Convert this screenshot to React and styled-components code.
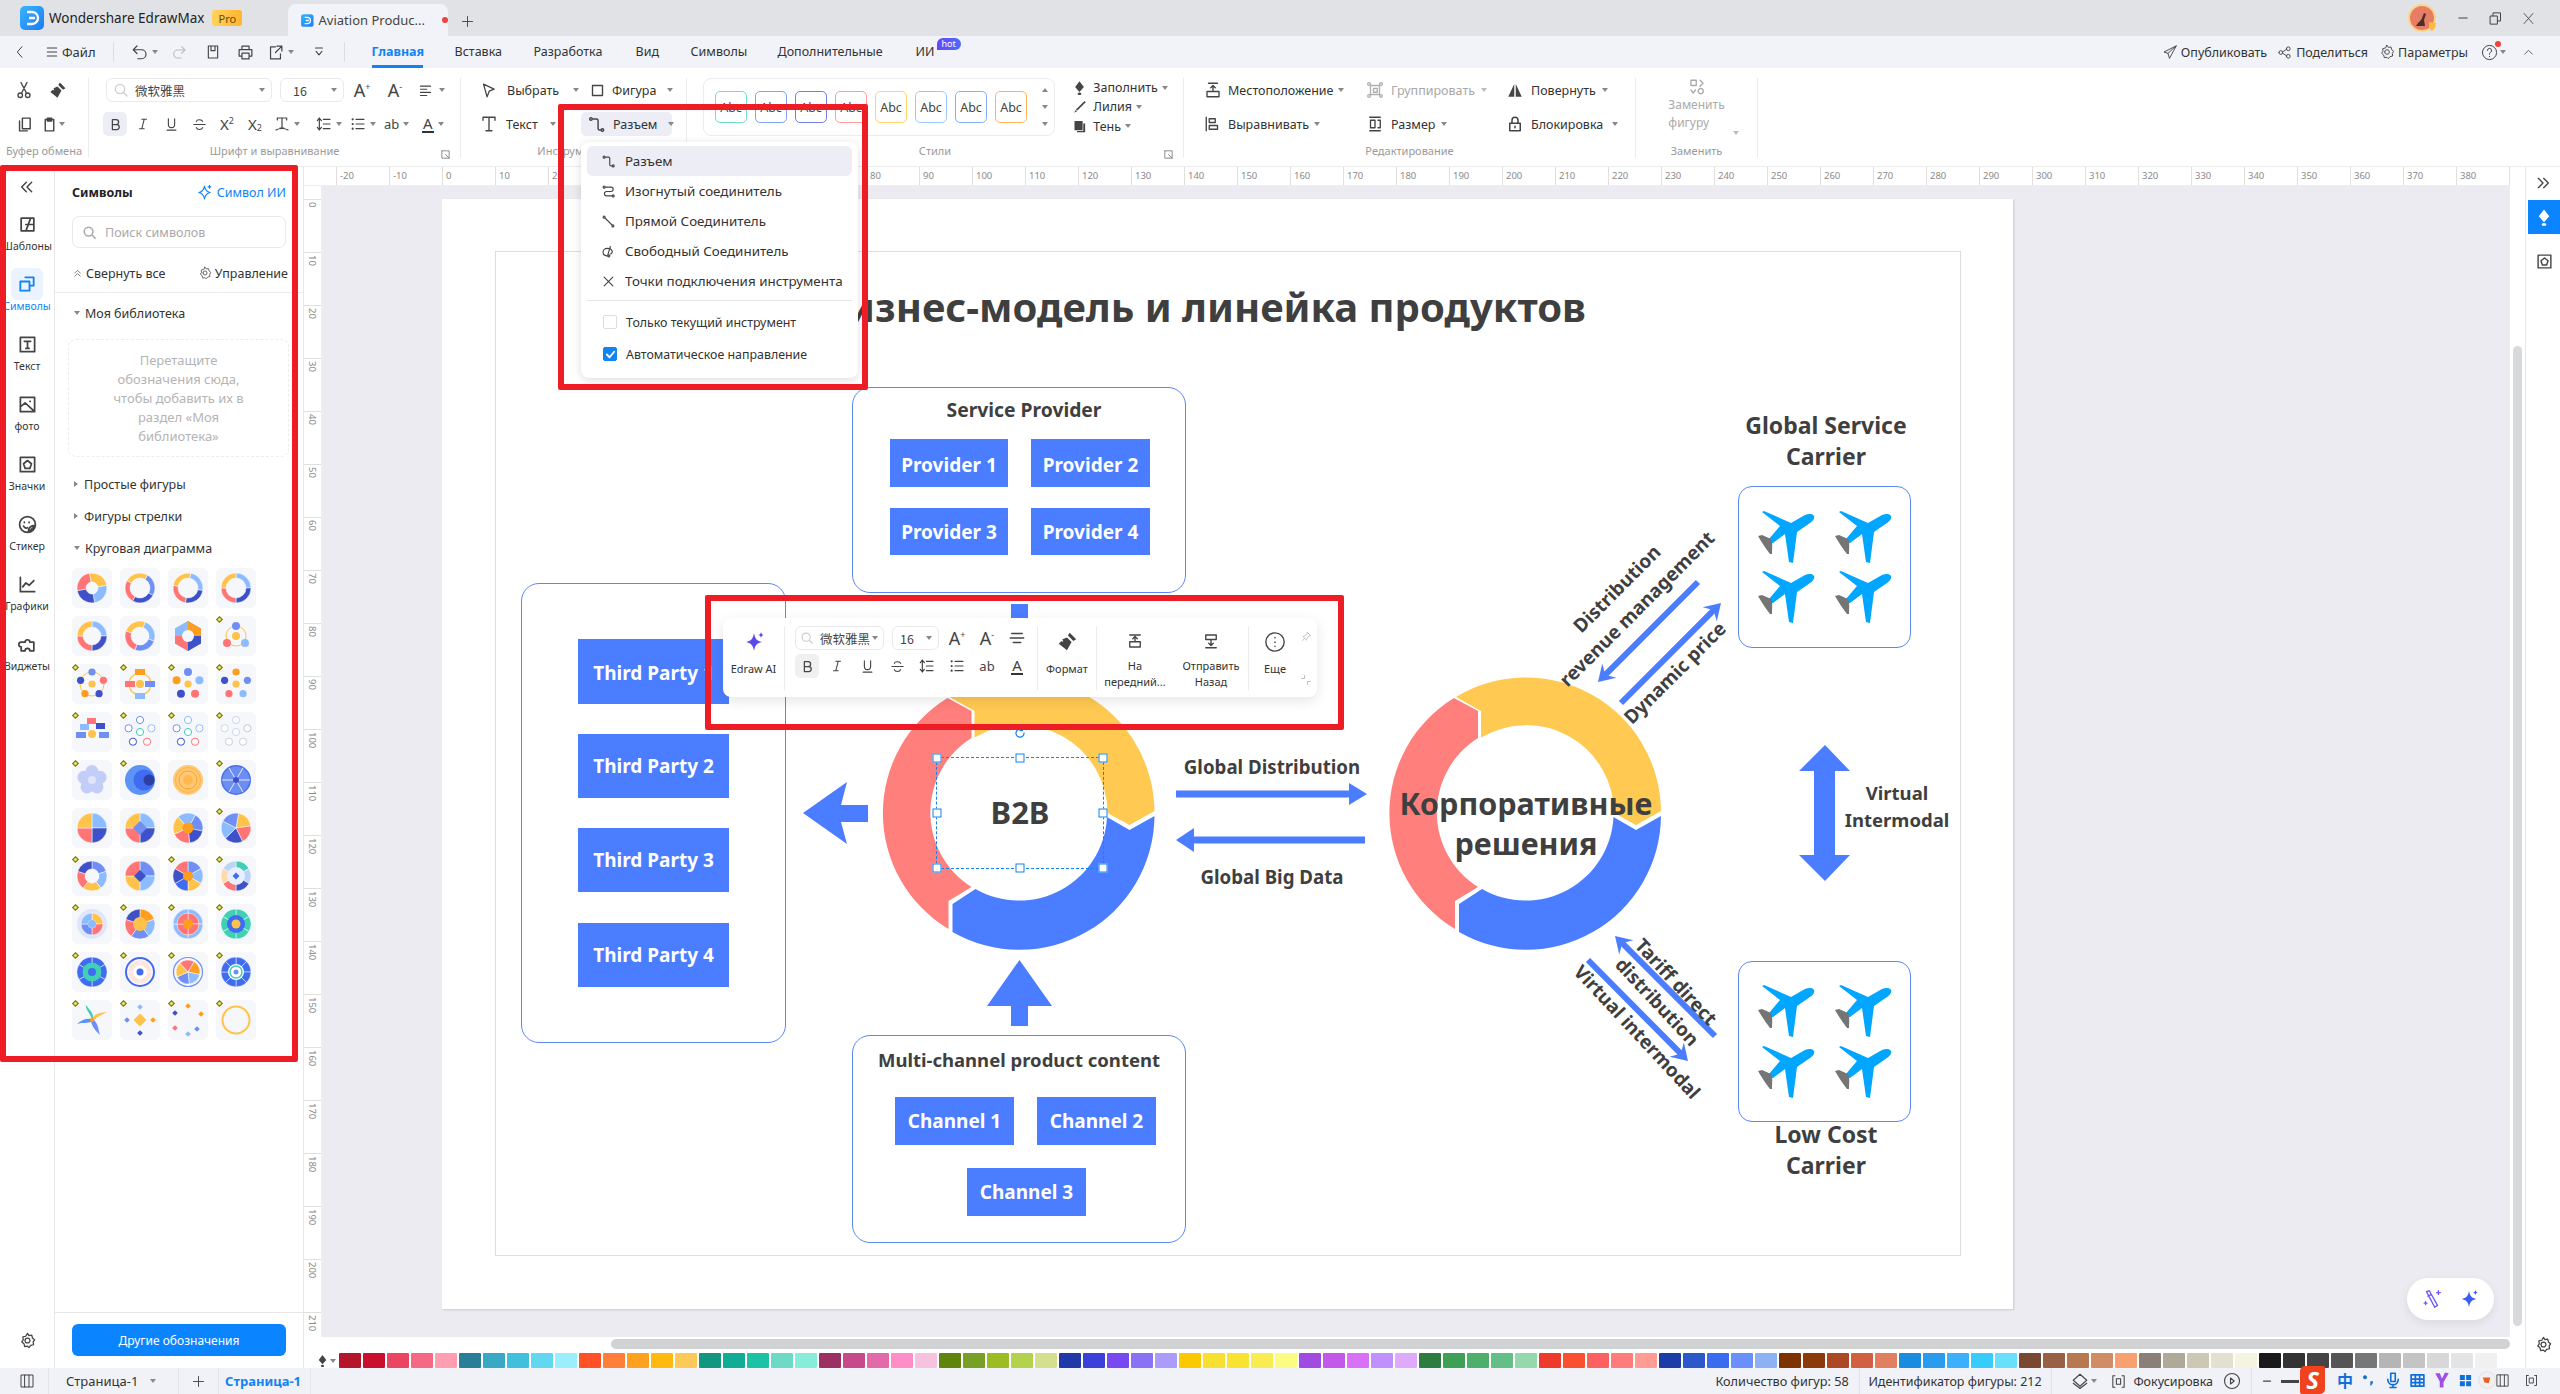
import React from "react";
import styled, { createGlobalStyle } from "styled-components";

const GlobalStyle = createGlobalStyle`
  html, body { margin: 0; padding: 0; background: #fff; overflow: hidden; }
  body { font-family: "Noto Sans", "Noto Sans CJK SC", sans-serif; color: #333; }
  * { box-sizing: border-box; }
`;

/* ---------- icon set ---------- */
const circ = (x, y, r) => `M${x - r} ${y}a${r} ${r} 0 1 0 ${2 * r} 0a${r} ${r} 0 1 0 ${-2 * r} 0`;
const SPARK = "M12 3c1 6 3 8 8 9-5 1-7 3-8 9-1-6-3-8-8-9 5-1 7-3 8-9z";
const P = {
  back: "M15 4 8 12l7 8",
  menu: "M5 6h14M5 12h14M5 18h14",
  undo: "M8 4 3 9l5 5M3 9h11a6 6 0 0 1 0 12H9",
  redo: "M16 4l5 5-5 5M21 9H10a6 6 0 0 0 0 12h5",
  save: "M5 3h14v18H5zM9 3v7h6V3",
  print: "M7 8V3h10v5M7 17H3V8h18v9h-4M7 13h10v8H7z",
  exportBox: "M12 4H5v17h14v-7M14 3h7v7M21 3l-9 9",
  more: "M6 5h12M7 11l5 6 5-6",
  cut: `M8.8 16 16 2M15.2 16 8 2${circ(7, 19, 3)}${circ(17, 19, 3)}`,
  copy: "M9 3h11v15H9zM5 7v14h11",
  paste: "M6 5h12v16H6zM9 3h6v4H9z",
  alignL: "M4 5h16M4 10h10M4 15h16M4 20h10",
  alignC: "M5 6h14M3 12h18M7 18h10",
  search: `${circ(10.5, 10.5, 7)}M16 16l5 5`,
  bold: "M7 4h6a4 4 0 0 1 0 8H7zM7 12h7a4 4 0 0 1 0 8H7z",
  italic: "M10 4h8M6 20h8M14 4l-4 16",
  under: "M7 3v9a5 5 0 0 0 10 0V3M5 21h14",
  strike: "M17 7c-1-3-9-4-10 0M3 12h18M7 17c1 4 9 4 10 0",
  list: `M9 5h12M9 12h12M9 19h12${circ(4, 5, .7)}${circ(4, 12, .7)}${circ(4, 19, .7)}`,
  spacing: "M11 5h10M11 12h10M11 19h10M5 3v18M2 7l3-4 3 4M2 17l3 4 3-4",
  txt: "M5 6V3h14v3M12 3v15M9 18h6M3 21c5-3 13-3 18 0",
  pointer: "M5 3l15 7-7 3-3 8z",
  square: "M4 4h16v16H4z",
  bigT: "M4 7V3h16v4M12 3v18M8 21h8",
  conn: `M8 5h4a2 2 0 0 1 2 2v10a2 2 0 0 0 2 2h1${circ(5, 5, 1.6)}${circ(19.5, 19, 1.6)}`,
  curve: `M8 5h8a3 3 0 0 1 0 7H9a3 3 0 0 0 0 7h8${circ(5, 5, 1.6)}${circ(19.5, 19, 1.6)}`,
  straight: `M6 6l12 12${circ(5, 5, 1.6)}${circ(19, 19, 1.6)}`,
  free: `M10 19c-9 0-9-12 0-12s10 8 5 9M15 4l-4 13${circ(12.5, 19, 1.6)}`,
  cross: "M5 5l14 14M19 5 5 19",
  gear: `M12 2l2 3 4-.5 1 4 3 2.500-2 3 .5 4-4 1-2.500 3-2-2-4 .5-1-4-3-2.500 2-3-.5-4 4-1z${circ(12, 12, 3.5)}`,
  share: `${circ(6, 12, 3)}${circ(18, 6, 3)}${circ(18, 18, 3)}M9 11l6-4M9 13l6 4`,
  send: "M21 3 3 12l6 2 2 7zM21 3 9 14",
  help: `${circ(12, 12, 10)}M9 9a3 3 0 1 1 4 3c-1 .5-1 1-1 2.500M12 17.500v.5`,
  chevUp: "M5 15l7-7 7 7",
  chevsL: "M11 5l-7 7 7 7M19 5l-7 7 7 7",
  chevsR: "M5 5l7 7-7 7M13 5l7 7-7 7",
  chevsUp: "M6 11l6-6 6 6M6 18l6-6 6 6",
  template: "M4 4h16v16H4zM16 4l-6 16M10 12h10",
  symbols: "M10 4h10v10h-4M4 9h11v11H4z",
  textBox: "M3 3h18v18H3zM8 8h8M12 8v9M10 17h4",
  photo: "M3 3h18v18H3zM3 15l6-5 11 10M15 8h.5",
  badge: "M3 3h18v18H3zM12 7l5 4-2 6H9l-2-6z",
  sticker: `${circ(12, 12, 10)}M8 9v.5M14 9v.5M22 13l-9 9c0-6 3-9 9-9M7 14c1 2 3 3 5 2`,
  chart: "M3 3v18h18M6 15l4-5 4 3 6-6",
  puzzle: "M4 9h5a3 3 0 1 1 6 0h5v11h-5a3 3 0 1 0-6 0H4v-5a3 3 0 1 1 0-6z",
  sliders: "M9 3H3v18h6M15 3h6v18h-6M9 3h6v18H9z",
  plus: "M12 4v16M4 12h16",
  minus: "M5 12h14",
  focus: "M4 4h3M4 4v16h3M20 4h-3M20 4v16h-3M9 8h6v8H9z",
  play: `${circ(12, 12, 10)}M10 8l5 4-5 4z`,
  layers: "M12 3l9 8-9 8-9-8zM3 15l9 7 9-7",
  pin: "M14 3l7 7-4 1-4 5-1 4-8-8 4-1 5-4zM8 16l-5 5",
  dotsCircle: `${circ(12, 12, 10)}M12 7v.5M12 12v.5M12 16.500v.5`,
  front: "M5 4h14M12 7v5M9 9l3-3 3 3M5 13h14v7H5z",
  backward: "M5 4h14v6H5zM12 10v7M9 15l3 3 3-3M5 21h14",
  pos: "M6 3h12M12 6v7M9 9l3-3 3 3M4 14h16v7H4z",
  alignObj: "M3 3v18M7 5h8v5H7zM7 14h11v5H7z",
  group: `M6 6h12v12H6zM10 10h5v5h-5z${circ(4, 4, 1.8)}${circ(20, 4, 1.8)}${circ(4, 20, 1.8)}${circ(20, 20, 1.8)}`,
  size: "M5 3h14M5 21h14M6 7h6v10H6zM16 7h3v10h-3",
  lock: "M5 11h14v10H5zM8 11V7a4 4 0 0 1 8 0v4M12 15v2",
  replace: "M4 3h7v7H4zM17 14a3.500 3.500 0 1 1-.01 0M16 3l4 4-4 4M4 16l3 4 3-4",
  launcher: "M4 4h16v10M4 4v16h10M12 12l8 8M20 15v5h-5",
  restore: "M8 8V3h12v13h-5M4 8h11v13H4z",
  close: "M5 4l14 16M19 4 5 20",
  tableIc: "M3 4h18v16H3zM3 10h18M3 15h18M9 4v16M15 4v16",
  mic: "M9 3h6v11H9zM5 11c0 10 14 10 14 0M12 18v4M8 22h8",
  cornerArrows: "M3 9h6V3M21 15h-6v6",
  sparkOutline: `${SPARK}M19 2v4M17 4h4`,
  wand: "M6 4l3-1 9 16-3 2zM7.500 9l4-2M19 3v4M17 5h4M5 15v3M3.500 16.500h3",
};
const FILLED = {
  brush: "M15 2l7 7-3 2-6-6zM12 7l5 5-5 9-9-7 3-3 2 1-1-3z",
  fillBucket: "M12 2l7 9-7 8-7-8zM12 20a3 2 0 1 0 .01 0z",
  line: "M20 3l2 2L9 18l-3-1zM6 18l3 1-6 3z",
  shadow: "M4 3h13v15H4zM18 7h3v14H8v-2h10z",
  rotate: "M11 4v17H3zM13 4l8 17h-8z",
  sparkle: `${SPARK}M19 2c.4 2 1 2.600 3 3-2 .4-2.600 1-3 3-.4-2-1-2.600-3-3 2-.4 2.600-1 3-3z`,
  quote: "M6 5a3 3 0 1 0 .01 0zM14 14h4c0 4-2 6-4 7z",
  imeFig: "M3 3l6 0 3 7 4-8 5 1-7 12v7h-5v-8z",
  imeGrid: "M3 3h8v8H3zM13 3h8v8h-8zM3 13h8v8H3zM13 13h8v8h-8z",
};
const IconSvg = styled.svg`
  width: ${p => p.$s || 16}px; height: ${p => p.$s || 16}px; flex: none; display: block;
  fill: none; stroke: ${p => p.$c || "#444"}; stroke-width: ${p => p.$w || 1.8};
  stroke-linecap: round; stroke-linejoin: round;
`;
const FillSvg = styled.svg`
  width: ${p => p.$s || 16}px; height: ${p => p.$s || 16}px; flex: none; display: block;
  fill: ${p => p.$c || "#444"};
`;
const I = ({ n, s, c, w }) => <IconSvg viewBox="0 0 24 24" $s={s} $c={c} $w={w}><path d={P[n]} /></IconSvg>;
const F = ({ n, s, c }) => <FillSvg viewBox="0 0 24 24" $s={s} $c={c}><path d={FILLED[n]} /></FillSvg>;

const Caret = styled.i`
  display: inline-block; flex: none; width: 0; height: 0;
  margin-left: ${p => p.$ml ?? 4}px;
  border-left: 3px solid transparent; border-right: 3px solid transparent;
  border-top: 4px solid ${p => p.$c || "#888"};
`;

/* ---------- frame ---------- */
const Root = styled.div`
  position: relative; width: 2560px; height: 1394px; overflow: hidden;
  display: flex; flex-direction: column; background: #fff;
`;
const TitleBar = styled.div`
  height: 36px; flex: none; background: #e1e2e6; display: flex; align-items: flex-end; position: relative;
`;
const AppTab = styled.div`
  display: flex; align-items: center; height: 36px; width: 288px; padding-left: 20px; font-size: 13.5px; color: #222; gap: 5px;
`;
const ProBadge = styled.span`
  margin-left: 3px; width: 30px; height: 16px; border-radius: 3px; background: linear-gradient(90deg,#ffd35c,#ffb52e);
  display: flex; align-items: center; justify-content: center; font-size: 11px; color: #6a4300;
`;
const DocTab = styled.div`
  width: 160px; height: 32px; background: #f2f3f8; border-radius: 8px 8px 0 0; display: flex; align-items: center;
  padding-left: 13px; gap: 5px; font-size: 13px; color: #444; white-space: nowrap;
`;
const RedDot = styled.i`
  width: 6px; height: 6px; border-radius: 50%; background: #f0413a; margin-left: 12px; flex: none;
`;
const NewTab = styled.div`
  margin: 0 0 7px 12px; color: #444; display: flex;
`;
const WindowControls = styled.div`
  margin-left: auto; display: flex; align-items: center; height: 36px; padding-right: 20px;
`;
const Avatar = styled.div`
  position: relative; width: 28px; height: 28px; margin-right: 16px;
`;
const WinBtn = styled.div`
  width: ${p => p.$w || 30}px; display: flex; justify-content: center;
`;

const MenuBar = styled.div`
  height: 32px; flex: none; background: #f2f3f8; display: flex; align-items: center; font-size: 13px; color: #333;
`;
const MenuCell = styled.div`
  display: flex; align-items: center; flex: none; margin-left: ${p => p.$ml || 0}px; gap: ${p => p.$gap || 0}px;
`;
const MenuSep = styled.i`
  width: 1px; height: 20px; background: #dcdde2; flex: none; margin-left: ${p => p.$ml || 0}px;
`;
const MenuTabs = styled.div`
  display: flex; gap: 32px; margin-left: 27px; height: 32px;
`;
const MenuTab = styled.div`
  position: relative; width: ${p => p.$w}px; white-space: nowrap; height: 32px; line-height: 31px; font-size: 12.5px;
  font-weight: ${p => (p.$active ? 700 : 400)}; color: ${p => (p.$active ? "#1283f3" : "#333")};
  border-bottom: ${p => (p.$active ? "3px solid #1283f3" : "0")};
`;
const HotBadge = styled.span`
  position: absolute; left: 21px; top: 2px; width: 24px; height: 12px; background: linear-gradient(90deg,#6a46f5,#4b6cff);
  border-radius: 6px 6px 6px 0; color: #fff; font-size: 9px; line-height: 12px; text-align: center; font-weight: 400;
`;
const MenuRight = styled.div`
  margin-left: auto; display: flex; align-items: center; padding-right: 25px; font-size: 12.5px; white-space: nowrap;
`;
const HelpDot = styled.i`
  position: absolute; right: -3px; top: -3px; width: 6px; height: 6px; border-radius: 50%; background: #f0413a;
`;
const HelpWrap = styled.div`
  position: relative; display: flex;
`;

/* ---------- ribbon ---------- */
const Ribbon = styled.div`
  height: 99px; flex: none; background: #fff; display: flex; border-bottom: 1px solid #ececec; font-size: 12.5px; color: #333;
`;
const Group = styled.div`
  position: relative; width: ${p => p.$w}px; flex: none; height: 80px; margin-top: 10px;
  ${p => (p.$last ? "" : "border-right: 1px solid #ececec;")}
  display: flex; flex-direction: column;
`;
const Rows = styled.div`
  height: 58px; display: flex; flex-direction: column; gap: 10px; flex: none;
`;
const Row = styled.div`
  height: 24px; display: flex; align-items: center; padding-left: ${p => p.$pl || 0}px; gap: ${p => p.$gap || 0}px; white-space: nowrap;
`;
const GroupLabel = styled.div`
  flex: none; margin-top: 5px; text-align: center; height: 17px;
  font-size: 11px; line-height: 20px; color: #9a9a9a; white-space: nowrap;
`;
const Launcher = styled.div`
  position: absolute; right: ${p => p.$r}px; bottom: -2px; color: #777;
`;
const Cell = styled.div`
  width: ${p => p.$w || 24}px; height: 24px; flex: none; display: flex; align-items: center; justify-content: ${p => (p.$start ? "flex-start" : "center")};
  margin-left: ${p => p.$ml || 0}px; border-radius: 5px; font-size: 13px; color: #444;
  ${p => (p.$on ? `background: ${p.$on};` : "")}
`;
const BigA = styled.span`
  font-size: 18px; line-height: 20px; color: #444;
`;
const Tiny = styled.span`
  font-size: 9px; line-height: 9px; align-self: ${p => (p.$low ? "flex-end" : "flex-start")}; margin: ${p => (p.$low ? "0 0 4px" : "4px 0 0")};
`;
const UnderA = styled.span`
  font-size: 15px; line-height: 16px; color: #444; border-bottom: 2px solid #333; padding: 0 1px;
`;
const SubX = styled.span`
  font-size: 15px; line-height: 18px; color: #444;
`;
const FontSelect = styled.div`
  width: ${p => p.$w}px; height: 24px; flex: none; border: 1px solid #e9e9ec; border-radius: 6px; display: flex; align-items: center;
  padding: 0 6px 0 ${p => p.$pad || 6}px; gap: 6px; font-size: 12.5px; color: #444; font-family: "Noto Sans CJK SC", sans-serif; white-space: nowrap; overflow: hidden;
`;
const Push = styled.span`
  margin-left: auto; display: flex;
`;
const Tool = styled.div`
  width: ${p => p.$w}px; height: 24px; flex: none; display: flex; align-items: center; padding-left: ${p => p.$pl || 0}px; gap: ${p => p.$gap || 6}px;
  border-radius: 5px; color: ${p => (p.$dim ? "#a8a8a8" : "#333")}; white-space: nowrap; font-size: 12.5px;
  ${p => (p.$on ? "background: #ecedf5;" : "")}
`;
const Gallery = styled.div`
  margin-left: 16px; width: 352px; height: 58px; border: 1px solid #ececef; border-radius: 8px; display: flex; align-items: center; padding-left: 11px; gap: 8px; flex: none; position: relative;
`;
const Swatch = styled.div`
  width: 32px; height: 32px; flex: none; border: 1px solid ${p => p.$c}; border-radius: 5px; display: flex; align-items: center; justify-content: center; font-size: 12.5px; color: #444;
`;
const GalleryArrows = styled.div`
  position: absolute; right: 4px; top: 9px; bottom: 9px; display: flex; flex-direction: column; justify-content: space-between; align-items: center; width: 10px;
`;
const UpCaret = styled(Caret)`
  margin: 0; border-top: 0; border-bottom: 4px solid #888;
`;
const StylesRow = styled.div`
  display: flex; height: 58px; flex: none;
`;
const FillCol = styled.div`
  margin: 0 0 0 17px; display: flex; flex-direction: column;
`;
const FillRow = styled.div`
  height: 19.5px; display: flex; align-items: center; gap: 3px; white-space: nowrap; font-size: 12.5px;
`;
const EditCol = styled.div`
  width: ${p => p.$w}px; flex: none; display: flex; flex-direction: column; gap: 10px;
`;
const EditCols = styled.div`
  display: flex; height: 58px; flex: none; padding-left: 20px;
`;
const ReplaceBlock = styled.div`
  height: 58px; position: relative; display: flex; flex-direction: column; align-items: center; color: #aaa; font-size: 12px; line-height: 18px; flex: none;
`;
const ReplaceCaret = styled.span`
  position: absolute; right: 18px; top: 44px;
`;

/* ---------- main ---------- */
const Main = styled.div`
  flex: 1; min-height: 0; display: flex;
`;
const LeftSide = styled.div`
  width: 304px; flex: none; display: flex; background: #fff;
`;
const Rail = styled.div`
  width: 55px; flex: none; display: flex; flex-direction: column; align-items: center; border-right: 1px solid #e7e7e7;
`;
const RailTop = styled.div`
  height: 39px; display: flex; align-items: center; flex: none;
`;
const RailItem = styled.div`
  width: 55px; height: 60px; flex: none; display: flex; flex-direction: column; align-items: center; padding-top: 2px;
  font-size: 10.5px; color: ${p => (p.$active ? "#1283f3" : "#333")}; white-space: nowrap;
`;
const RailIcon = styled.div`
  width: 32px; height: 32px; border-radius: 6px; display: flex; align-items: center; justify-content: center; background: ${p => (p.$active ? "#eaf3ff" : "transparent")};
`;
const RailLabel = styled.div`
  line-height: 14px; margin-top: -1px;
`;
const RailBottom = styled.div`
  margin-top: auto; height: 56px; flex: none; display: flex; align-items: center;
`;
const SymPanel = styled.div`
  width: 249px; flex: none; display: flex; flex-direction: column; border-right: 1px solid #e7e7e7;
`;
const PanelHead = styled.div`
  height: 49px; flex: none; padding: 2px 17px 0; display: flex; align-items: center; justify-content: space-between;
`;
const PanelTitle = styled.div`
  font-size: 12.5px; font-weight: 700; color: #222;
`;
const AiLink = styled.div`
  display: flex; align-items: center; gap: 4px; color: #1283f3; font-size: 12.5px; white-space: nowrap;
`;
const SearchBox = styled.div`
  height: 32px; margin: 0 17px; flex: none; border: 1px solid #e9e9ec; border-radius: 7px; display: flex; align-items: center; gap: 8px; padding-left: 9px; font-size: 12.5px; color: #a9a9a9; white-space: nowrap;
`;
const ActionRow = styled.div`
  height: 45px; flex: none; padding: 6px 15px 0 17px; border-bottom: 1px solid #ebebeb; display: flex; align-items: center; justify-content: space-between; font-size: 12.5px; color: #333; white-space: nowrap;
`;
const ActionItem = styled.div`
  display: flex; align-items: center; gap: 3px;
`;
const SectionHead = styled.div`
  height: ${p => p.$h || 32}px; flex: none; padding-left: 17px; display: flex; align-items: center; gap: 5px; font-size: 12.5px; color: #333; white-space: nowrap;
`;
const RightCaret = styled.i`
  width: 0; height: 0; flex: none; margin: 0 1px 0 2px; border-top: 3px solid transparent; border-bottom: 3px solid transparent; border-left: 4px solid #888;
`;
const DropZone = styled.div`
  margin: 6px 14px 11px 13px; height: 118px; flex: none; border: 1px dashed #ededed; border-radius: 8px; display: flex; align-items: center; justify-content: center;
  text-align: center; font-size: 13px; line-height: 19px; color: #b4b4b4; white-space: nowrap;
`;
const ThumbGrid = styled.div`
  margin: 4px 0 0 17px; display: grid; grid-template-columns: repeat(4, 40px); grid-auto-rows: 40px; gap: 8px;
`;
const Thumb = styled.div`
  position: relative; background: #f6f7fb; border-radius: 6px;
`;
const ThumbSvg = styled.svg`
  width: 40px; height: 40px; display: block;
`;
const Premium = styled.i`
  position: absolute; left: 1px; top: 1px; width: 5px; height: 5px; background: #f6e33c; border: 1px solid #6b6b3a; transform: rotate(45deg);
`;
const PanelFoot = styled.div`
  margin-top: auto; height: 56px; flex: none; border-top: 1px solid #e7e7e7; padding: 11px 17px 0;
`;
const MoreBtn = styled.div`
  height: 32px; background: #0a84ff; color: #fff; border-radius: 6px; display: flex; align-items: center; justify-content: center; font-size: 12px;
`;

const Workspace = styled.div`
  flex: 1; min-width: 0; display: grid; grid-template-rows: 19px 1fr 16px 15px;
`;
const RulerTop = styled.div`
  display: flex; background: #fff; padding-left: 32px; overflow: hidden; border-bottom: 1px solid #eee; width: 2206px;
`;
const RulerCell = styled.div`
  width: 53px; flex: none; border-left: 1px solid #dfdfdf; padding: 0 0 0 3px; font-size: 9.5px; line-height: 18px; color: #8a8a8a;
`;
const CanvasRow = styled.div`
  display: flex; min-height: 0;
`;
const RulerLeft = styled.div`
  width: 18px; flex: none; background: #fff; padding-top: 13px; overflow: hidden; border-right: 1px solid #eee;
`;
const RulerLeftCell = styled.div`
  height: 53px; border-top: 1px solid #dfdfdf; display: flex; justify-content: flex-start; padding-left: 3px;
`;
const RulerLeftText = styled.span`
  writing-mode: vertical-rl; font-size: 9.5px; line-height: 10px; color: #8a8a8a; padding-top: 2px;
`;
const CanvasArea = styled.div`
  position: relative; flex: 1; min-width: 0; background: #ecebf1; overflow: hidden;
`;
const Page = styled.div`
  position: absolute; left: 120px; top: 13px; width: 1571px; height: 1110px; background: #fff; box-shadow: 1px 1px 2px rgba(0,0,0,.15);
`;
const PageFrame = styled.div`
  position: absolute; left: 53px; top: 52px; width: 1466px; height: 1005px; border: 1px solid #dedede;
`;
const DiagramSvg = styled.svg`
  position: absolute; inset: 0; width: 1571px; height: 1110px; display: block;
`;
const Title = styled.div`
  position: absolute; left: ${p => p.$x - 442}px; top: ${p => p.$y - 199}px; transform: translate(-50%, -50%);
  font-size: 40px; font-weight: 700; color: #3f3f3f; white-space: nowrap;
`;
const Frame = styled.div`
  position: absolute; left: ${p => p.$x - 442}px; top: ${p => p.$y - 199}px; width: ${p => p.$w}px; height: ${p => p.$h}px;
  border: 1px solid #5b86f5; border-radius: ${p => p.$r || 18}px;
`;
const BlueNode = styled.div`
  position: absolute; left: ${p => p.$x - 442}px; top: ${p => p.$y - 199}px; width: ${p => p.$w}px; height: ${p => p.$h}px;
  background: #4a7dff; color: #fff; font-size: 19px; font-weight: 700; display: flex; align-items: center; justify-content: center; white-space: nowrap; padding-top: ${p => p.$pt || 0}px;
`;
const Label = styled.div`
  position: absolute; left: ${p => p.$x - 442}px; top: ${p => p.$y - 199}px; transform: translate(-50%, -50%) rotate(${p => p.$rot || 0}deg);
  font-size: ${p => p.$fs || 18.7}px; font-weight: ${p => p.$fw || 700}; color: #3f3f3f; white-space: nowrap; text-align: center; line-height: ${p => (p.$lh ? p.$lh + "px" : "1.2")};
`;
const SelBox = styled.div`
  position: absolute; left: ${936 - 442}px; top: ${757 - 199}px; width: 168px; height: 112px; border: 1px dashed #1283f3;
`;
const Handle = styled.i`
  position: absolute; left: ${p => p.$x}%; top: ${p => p.$y}%; width: 9px; height: 9px; background: #fff; border: 1px solid #1283f3; transform: translate(-50%, -50%);
`;
const TopHandle = styled.i`
  position: absolute; left: ${1011 - 442}px; top: ${604 - 199}px; width: 17px; height: 14px; background: #4a7dff;
`;
const RotHandle = styled.div`
  position: absolute; left: ${1014 - 442}px; top: ${727 - 199}px; display: flex;
`;
const AiPill = styled.div`
  position: absolute; right: 16px; bottom: 17px; width: 87px; height: 42px; background: #fff; border-radius: 21px; box-shadow: 0 3px 10px rgba(0,0,0,.08); display: flex; align-items: center; justify-content: space-around; padding: 0 7px;
`;
const VTrack = styled.div`
  width: 15px; flex: none; background: #fff; padding: 160px 3px 0;
`;
const VThumb = styled.div`
  width: 9px; height: 980px; border-radius: 5px; background: #d8d9db;
`;
const HTrack = styled.div`
  background: #fff; padding: 2px 15px 0 307px;
`;
const HThumb = styled.div`
  height: 10px; border-radius: 5px; background: #d1d2d4;
`;
const PaletteRow = styled.div`
  display: flex; align-items: center; background: #fff; padding-left: 12px; gap: 2px;
`;
const PaletteIcon = styled.div`
  width: 21px; flex: none; display: flex; align-items: center;
`;
const Shade = styled.i`
  width: 22px; height: 15px; flex: none; background: ${p => p.$c}; border-radius: 1px;
`;
const RightRail = styled.div`
  width: 35px; flex: none; background: #fff; border-left: 1px solid #e7e7e7; display: flex; flex-direction: column; align-items: center; padding-top: 8px;
`;
const RailTile = styled.div`
  width: 33px; height: 34px; margin: ${p => p.$mt || 0}px 0 0 2px; display: flex; align-items: center; justify-content: center; background: ${p => (p.$on ? "#0a84ff" : "transparent")};
`;
const RightBottom = styled.div`
  margin-top: auto; height: 32px; display: flex;
`;

/* ---------- status bar ---------- */
const StatusBar = styled.div`
  height: 26px; flex: none; background: #f1f2f7; display: flex; align-items: center; font-size: 13px; color: #333; white-space: nowrap;
`;
const StatusCell = styled.div`
  height: 26px; flex: none; display: flex; align-items: center; width: ${p => (p.$w ? p.$w + "px" : "auto")}; padding-left: ${p => p.$pl || 0}px; gap: ${p => p.$gap || 0}px;
  ${p => (p.$line ? "border-right: 1px solid #e3e4ea;" : "")}
  color: ${p => (p.$blue ? "#1283f3" : "#333")}; font-weight: ${p => (p.$blue ? 700 : 400)}; font-size: ${p => p.$fs || 13}px;
`;
const StatusRight = styled.div`
  margin-left: auto; display: flex; align-items: center; height: 26px;
`;
const ZoomBar = styled.i`
  width: 18px; height: 3px; background: #444; margin-left: 8px; flex: none;
`;
const ImeBar = styled.div`
  position: absolute; left: 2300px; top: 1366px; width: 197px; height: 28px; display: flex; align-items: center;
`;
const ImeLogo = styled.div`
  width: 25px; height: 28px; background: #f0421c; border-radius: 5px 2px 5px 2px; color: #fff; font-size: 24px; font-weight: 700; font-style: italic; display: flex; align-items: center; justify-content: center; flex: none; line-height: 1;
`;
const ImeChar = styled.div`
  margin-left: 8px; width: 24px; flex: none; font-size: 16px; font-weight: 700; color: #1170d8; text-align: center; font-family: "Noto Sans CJK SC", sans-serif; line-height: 1;
`;
const ImeIcon = styled.div`
  width: ${p => p.$w || 24}px; flex: none; display: flex; justify-content: center;
`;
const StatusEndWrap = styled.div`
  position: absolute; right: 21px; top: 1373px; display: flex; gap: 14px; align-items: center;
`;

/* ---------- overlays ---------- */
const RedBox = styled.div`
  position: absolute; left: ${p => p.$x}px; top: ${p => p.$y}px; width: ${p => p.$w}px; height: ${p => p.$h}px;
  border: 6px solid #ee1c25; border-radius: 2px; pointer-events: none;
`;
const Dropdown = styled.div`
  position: absolute; left: 581px; top: 142px; width: 277px; height: 236px; background: #fff; border-radius: 8px; box-shadow: 0 2px 10px rgba(0,0,0,.14); padding: 4px 6px; font-size: 13.4px; color: #333;
`;
const DropItem = styled.div`
  height: 30px; display: flex; align-items: center; gap: 9px; padding-left: 14px; border-radius: 6px; white-space: nowrap;
  ${p => (p.$on ? "background: #ecedf5;" : "")}
`;
const DropSep = styled.div`
  height: 1px; background: #e5e5e8; margin: 4px 0 0;
`;
const CheckRow = styled.div`
  height: 32px; display: flex; align-items: center; gap: 9px; padding-left: 16px; font-size: 12.4px; white-space: nowrap; margin-top: ${p => p.$mt || 0}px;
`;
const Check = styled.div`
  width: 14px; height: 14px; flex: none; border-radius: 2px; border: 1px solid ${p => (p.$on ? "#1283f3" : "#ddd")}; background: ${p => (p.$on ? "#1283f3" : "#fff")}; display: flex; align-items: center; justify-content: center;
`;
const FloatBar = styled.div`
  position: absolute; left: 723px; top: 618px; width: 594px; height: 79px; background: #fff; border-radius: 8px; box-shadow: 0 4px 14px rgba(0,0,0,.1); display: flex; font-size: 11px; color: #333;
`;
const FloatSection = styled.div`
  width: ${p => p.$w}px; flex: none; margin: 8px 0 7px; position: relative; display: flex; ${p => (p.$last ? "" : "border-right: 1px solid #ececec;")}
`;
const ColBtn = styled.div`
  width: ${p => p.$w || "100%"}; display: flex; flex-direction: column; align-items: center; text-align: center; line-height: 16px; white-space: nowrap; flex: none;
`;
const FloatIcon = styled.div`
  height: ${p => p.$h || 32}px; display: flex; align-items: center; justify-content: center; margin-bottom: ${p => p.$mb ?? 3}px;
`;
const FloatFont = styled.div`
  padding: 0 0 0 10px; display: flex; flex-direction: column; gap: 4px;
`;
const FloatRow = styled.div`
  display: flex; height: 24px; align-items: center; gap: ${p => p.$gap || 0}px;
`;
const PinIcon = styled.div`
  position: absolute; right: 5px; top: 5px;
`;
const CornerIcon = styled.div`
  position: absolute; right: 5px; bottom: 4px;
`;

/* ---------- thumbnail art ---------- */
const Y = "#ffc24a", LB = "#8cbcff", DB = "#3f51c8", R = "#ff7474", MB = "#6f8ff5", O = "#ff9d1e", T = "#3fd0b5", PB = "#c2cdf8";
const pol = (r, a) => [20 + r * Math.cos(a * Math.PI / 180), 20 + r * Math.sin(a * Math.PI / 180)];
const seg = (Ro, ri, a0, a1) => {
  const [x0, y0] = pol(Ro, a0), [x1, y1] = pol(Ro, a1), [x2, y2] = pol(ri, a1), [x3, y3] = pol(ri, a0);
  const big = a1 - a0 > 180 ? 1 : 0;
  return `M${x0} ${y0}A${Ro} ${Ro} 0 ${big} 1 ${x1} ${y1}L${x2} ${y2}${ri > 0 ? `A${ri} ${ri} 0 ${big} 0 ${x3} ${y3}` : ""}Z`;
};
const ring = (Ro, ri, cs, off = -90) => cs.map((c, i) => (
  <path key={`${Ro}-${i}`} d={seg(Ro, ri, off + i * 360 / cs.length, off + (i + 1) * 360 / cs.length)} fill={c} stroke="#fff" strokeWidth=".5" />
));
const dot = (x, y, r, f, k, s) => <circle key={k ?? `${x}${y}${r}`} cx={x} cy={y} r={r} fill={f} stroke={s || "none"} strokeWidth={s ? 1 : 0} />;
const hub = (n, Ro, rd, cs, ctr = Y, hollow = false) => (
  <>
    {cs.map((c, i) => { const [x, y] = pol(Ro, -90 + i * 360 / n); return dot(x, y, rd, hollow ? "#fff" : c, i, hollow ? c : null); })}
    {dot(20, 20, 3.6, hollow ? "#fff" : ctr, "c", hollow ? ctr : null)}
  </>
);
const diamond = (s, c) => <path d={`M20 ${20 - s}L${20 + s} 20L20 ${20 + s}L${20 - s} 20Z`} fill={c} />;
const circ2 = (r, c, w = 2) => <circle cx="20" cy="20" r={r} fill="none" stroke={c} strokeWidth={w} />;
const arrowDot = (x, y, c) => <rect x={x - 2} y={y - 2} width="4" height="4" fill={c} transform={`rotate(45 ${x} ${y})`} />;

const ART = [
  ring(15, 6, [Y, LB, DB, R], -100), ring(15, 10, [MB, DB, R, Y], -60), ring(15, 10, [LB, DB, R, Y], -80), ring(15, 10, [LB, DB, R, Y], -90),
  ring(15, 9, [LB, DB, R, Y], -90), ring(15, 9, [LB, MB, R, Y], -70),
  <><path d="M20 5 33 12.500V27.500L20 35 7 27.500V12.500Z" fill={LB} /><path d="M20 5 33 12.500V20H20Z" fill={O} /><path d="M7 27.500 20 35V20H7Z" fill={R} /><path d="M7 12.500 20 5V20H7Z" fill={LB} /><path d="M20 20H33V27.500L20 35Z" fill={DB} />{dot(20, 20, 6, "#f6f7fb")}</>,
  <>{circ2(10, Y, 1)}{dot(20, 10, 4, MB)}{dot(11, 27, 4, R)}{dot(29, 27, 4, LB)}{dot(20, 20, 4, Y)}</>,

  <>{circ2(12, Y, 1)}{hub(5, 12, 3.6, [MB, R, DB, O, DB])}</>,
  <>{circ2(11, Y, 1.200)}<rect x="15" y="5" width="10" height="6" fill={O} /><rect x="5" y="17" width="10" height="6" fill={R} /><rect x="25" y="17" width="10" height="6" fill={MB} /><rect x="15" y="29" width="10" height="6" fill={LB} />{dot(20, 20, 4, Y)}</>,
  hub(5, 12, 4, [MB, LB, R, DB, O]),
  hub(5, 12, 3.6, [O, MB, LB, R, DB]),

  <><rect x="15" y="6" width="9" height="6" fill={R} /><rect x="8" y="12" width="9" height="6" fill={LB} /><rect x="24" y="11" width="9" height="6" fill={DB} /><rect x="4" y="20" width="10" height="6" fill={MB} /><rect x="27" y="20" width="10" height="6" fill={MB} />{dot(20, 22, 4, Y)}</>,
  hub(5, 12, 3.6, [MB, LB, R, DB, MB], T, true),
  hub(5, 12, 3.6, [LB, LB, R, DB, MB], T, true),
  hub(5, 12, 3.6, ["#c8d8f0", "#c0c8c8", "#c8d0d8", "#c8d0d8", "#c8d8f0"], "#c8d8f0", true),

  <>{[0, 1, 2, 3, 4].map(i => { const [x, y] = pol(8.5, -90 + i * 72); return dot(x, y, 6.5, PB, i); })}{dot(20, 20, 4, "#dfe5fb")}</>,
  <>{dot(20, 20, 15, "#5c93f7")}{dot(24, 20, 10.5, "#3f6cf0")}{dot(29, 20, 5.5, "#2d3fa0")}</>,
  <>{dot(20, 20, 15, "#ffc873")}{circ2(12.5, "#ffb142", 1)}{circ2(9, "#ffa32a", 1)}{dot(20, 20, 5, "#ffb84f")}</>,
  <>{dot(20, 20, 15, "#4a6fe8")}{dot(20, 20, 13.500, "#6c8ef2")}{[0, 60, 120, 180, 240, 300].map(a => { const [x, y] = pol(14, a); return <line key={a} x1="20" y1="20" x2={x} y2={y} stroke="#fff" strokeWidth=".8" />; })}{dot(20, 20, 3, DB)}</>,

  ring(15, 0, [LB, DB, R, Y]),
  <>{ring(15, 0, [LB, DB, R, Y])}{diamond(7, MB)}</>,
  <>{ring(15, 0, [MB, DB, R, Y, LB], -60)}{dot(20, 20, 5.500, O)}</>,
  ring(15, 0, [Y, R, DB, LB, MB], -80),

  ring(15, 7, [MB, LB, Y, R, DB], -90),
  <>{ring(15, 0, [MB, LB, Y, R], -90)}{diamond(6, DB)}</>,
  <>{ring(15, 0, [MB, LB, Y, "#3f6cf0", DB, R], -90)}{dot(20, 20, 5, O)}</>,
  <>{ring(15, 0, [T, "#bcd4f8", DB, R, "#ffd9a8", "#bcd4f8"], -90)}{dot(20, 20, 9, "#e8f0ff")}{diamond(3.500, "#3f6cf0")}</>,

  <>{dot(20, 20, 15, "#dfe5fb")}{ring(11, 4, [Y, R, MB, LB], -90)}{dot(20, 20, 4, LB)}</>,
  <>{ring(15, 0, [O, LB, MB, R, DB], -90)}{dot(20, 20, 7, Y)}</>,
  <>{ring(15, 0, [LB, LB, LB, LB])}{ring(11, 0, [R, R, R, R])}{dot(20, 20, 5, O)}</>,
  <>{ring(15, 0, [T, T, T, T, T, T])}{dot(20, 20, 9, "#3f6cf0")}{dot(20, 20, 4.500, Y)}</>,

  <>{ring(15, 0, ["#3f6cf0", "#3f6cf0", "#3f6cf0", "#3f6cf0", "#3f6cf0", "#3f6cf0"])}{dot(20, 20, 9.500, T)}{dot(20, 20, 4, "#3f6cf0")}</>,
  <>{circ2(14, "#3f6cf0", 2)}{ring(12, 0, ["#fce5dd", "#fce5dd", "#fce5dd", "#fce5dd"])}{dot(20, 20, 7, "#fff")}{dot(20, 20, 3.500, "#3f6cf0")}</>,
  <>{circ2(14.500, MB, 1.200)}{ring(12, 0, [O, LB, MB, Y, R], -60)}</>,
  <>{ring(15, 0, ["#3f6cf0", "#3f6cf0", "#3f6cf0", "#3f6cf0", "#3f6cf0", "#3f6cf0", "#3f6cf0", "#3f6cf0"])}{dot(20, 20, 8, "#fff")}{circ2(6, T, 1.500)}{dot(20, 20, 2.500, MB)}</>,

  <>
    <path d="M20 20C18 12 13 10 14 5C17 10 22 12 21 20Z" fill={T} />
    <path d="M20 19C24 12 29 13 35 12C30 15 26 16 21 21Z" fill={Y} />
    <path d="M21 19C27 24 26 30 28 35C24 31 20 27 19 21Z" fill={MB} />
    <path d="M21 21C15 24 11 22 5 24C10 19 15 18 20 19Z" fill="#5c93f7" />
    {dot(20, 20, 2, O)}
  </>,
  <>{diamond(6.500, Y)}{arrowDot(20, 7, LB)}{arrowDot(33, 20, O)}{arrowDot(20, 33, DB)}{arrowDot(7, 20, MB)}</>,
  <>{arrowDot(20, 6, O)}{arrowDot(33, 14, O)}{arrowDot(29, 29, MB)}{arrowDot(20, 34, LB)}{arrowDot(7, 28, R)}{arrowDot(7, 13, DB)}</>,
  circ2(13.500, Y, 2),
];
const NO_BADGE = new Set([0, 1, 2, 3, 4, 5, 6, 18, 20, 21, 22, 25]);

const RING_YELLOW = "M-70-116L-45-102V-75.500A88 88 0 0 1 88 0L110 12 135-2A135 135 0 0 0-70-116Z";
const RING_BLUE = "M135 3 110 17 87.500 4A88 88 0 0 1-44 76L-67 91V119A135 135 0 0 0 135 3Z";
const RING_RED = "M-72-115-48-102V-75A88 88 0 0 0-48 74L-71 88V116A135 135 0 0 1-72-115Z";

const Ring3 = ({ x, y }) => (
  <g transform={`translate(${x} ${y})`}>
    <path d={RING_YELLOW} fill="#ffc952" />
    <path d={RING_RED} fill="#ff7f7c" />
    <path d={RING_BLUE} fill="#4a7dff" />
  </g>
);
const Plane = ({ x, y }) => (
  <g transform={`translate(${x} ${y})`}>
    <path d="M56 5C54 2 50 3 47 4L33 12 6 0 4 1 22 15 11 28 9 32 15 32 27 23 31 51 35 52 39 21 52 12C55 10 57 7 56 5Z" fill="#00a6ff" />
    <path d="M0 25 4 24 13 28C15 32 14 38 14 43L12 43C8 38 4 32 0 25Z" fill="#757575" />
  </g>
);
const Arrow = ({ x0, y0, x1, y1, w = 6, hl = 18, hw = 11, notch = 4 }) => {
  const a = Math.atan2(y1 - y0, x1 - x0) * 180 / Math.PI;
  const L = Math.hypot(x1 - x0, y1 - y0);
  return (
    <g transform={`translate(${x0} ${y0}) rotate(${a})`}>
      <path d={`M0 ${-w / 2}H${L - hl + notch}L${L - hl} ${-hw}L${L} 0L${L - hl} ${hw}L${L - hl + notch} ${w / 2}H0Z`} fill="#4a7dff" />
    </g>
  );
};

const COLORS = [
  "#b5152b", "#c8102e", "#ea4662", "#f46a85", "#ff9eb0", "#2a7f98", "#38a8c4", "#40c0dc", "#62d8f0", "#9beefc",
  "#ff5227", "#ff7f3a", "#ffa01e", "#ffb90f", "#ffc95a", "#12967f", "#10ad94", "#1cc2a6", "#6ddac8", "#88ecdb",
  "#9c3062", "#c74b8a", "#e36aa8", "#ff8ec8", "#f6c2de", "#5f850f", "#77a025", "#9dbc22", "#b4d24e", "#d4e08e",
  "#2038a8", "#3a40d8", "#7848f0", "#8a72f4", "#ab9bfc", "#fcc800", "#f8e030", "#f8e430", "#f8ec50", "#fcfc80",
  "#a04ce0", "#c458e8", "#d870f8", "#c090fc", "#dfaafc", "#2e7d40", "#3ea055", "#4cb06c", "#64be88", "#94d8ac",
  "#ee3a2c", "#fa5030", "#fc6060", "#ff7c7c", "#ff9c94", "#1c3ca8", "#2c58cc", "#3a6cf0", "#6a90fc", "#8cb2f4",
  "#7e3200", "#8c3a0a", "#ac4824", "#d06040", "#e08060", "#1a8ce0", "#2a9cf0", "#3cb0fc", "#38ccfc", "#68e0fc",
  "#784830", "#986044", "#b87850", "#d08c64", "#f8a070", "#8a8078", "#b0a898", "#ccc8b4", "#e4e0d0", "#f4f4e0",
  "#1a1a1a", "#333333", "#444444", "#555555", "#777777", "#b5b5b5", "#c4c4c4", "#d8d8d8", "#e4e4e4", "#f0f0f0",
];

const rulerTop = Array.from({ length: 42 }, (_, i) => -20 + i * 10);
const rulerLeft = Array.from({ length: 22 }, (_, i) => i * 10);
const RAIL = [
  ["template", "Шаблоны"], ["symbols", "Символы", true], ["textBox", "Текст"], ["photo", "фото"],
  ["badge", "Значки"], ["sticker", "Стикер"], ["chart", "Графики"], ["puzzle", "Виджеты"],
];
const HANDLES = [[0, 0], [50, 0], [100, 0], [0, 50], [100, 50], [0, 100], [50, 100], [100, 100]];
const SWATCHES = ["#6fe0c8", "#7fa4ee", "#6f82e4", "#ff9c9c", "#ffd56e", "#9cc8ff", "#86aef8", "#ffb45c"];

const LogoMark = ({ s = 24 }) => (
  <svg viewBox="0 0 24 24" width={s} height={s}>
    <defs><linearGradient id="lg" x1="0" y1="0" x2="1" y2="1"><stop offset="0" stopColor="#3ab4ff" /><stop offset="1" stopColor="#1a7cf5" /></linearGradient></defs>
    <rect width="24" height="24" rx="5" fill="url(#lg)" />
    <path d="M7 6h5a6 6 0 0 1 0 12H7M9 12h6" fill="none" stroke="#fff" strokeWidth="2.400" />
  </svg>
);

export default function App() {
  return (
    <Root>
      <GlobalStyle />
      <TitleBar>
        <AppTab>
          <LogoMark />
          Wondershare EdrawMax
          <ProBadge>Pro</ProBadge>
        </AppTab>
        <DocTab>
          <LogoMark s={15} />
          Aviation Produc...
          <RedDot />
        </DocTab>
        <NewTab><I n="plus" s={15} w={1.500} /></NewTab>
        <WindowControls>
          <Avatar>
            <svg viewBox="0 0 28 28" width="28" height="28">
              <circle cx="14" cy="14" r="13" fill="#e77d63" stroke="#f9d48c" strokeWidth="2" />
              <path d="M8 22c2-4 5-5 6-8l2-5 2 1-2 6 1 6z" fill="#4a2f2a" />
              <path d="M21 18l7 1-1 5-3 3-3-3z" fill="#ffb938" />
            </svg>
          </Avatar>
          <WinBtn $w={22}><I n="minus" s={14} w={2} /></WinBtn>
          <WinBtn $w={42}><I n="restore" s={15} w={1.600} /></WinBtn>
          <WinBtn $w={24}><I n="close" s={15} w={1.400} /></WinBtn>
        </WindowControls>
      </TitleBar>

      <MenuBar>
        <MenuCell $ml={12}><I n="back" s={16} w={1.500} /></MenuCell>
        <MenuCell $ml={16} $gap={2}><I n="menu" s={16} w={1.600} />Файл</MenuCell>
        <MenuSep $ml={17} />
        <MenuCell $ml={17}><I n="undo" s={18} w={1.600} /><Caret $ml={3} /></MenuCell>
        <MenuCell $ml={13}><I n="redo" s={16} c="#bbb" w={1.600} /></MenuCell>
        <MenuCell $ml={18}><I n="save" s={16} w={1.700} /></MenuCell>
        <MenuCell $ml={16}><I n="print" s={17} w={1.700} /></MenuCell>
        <MenuCell $ml={13}><I n="exportBox" s={17} w={1.700} /><Caret $ml={4} /></MenuCell>
        <MenuCell $ml={18}><I n="more" s={14} w={1.800} /></MenuCell>
        <MenuSep $ml={18} />
        <MenuTabs>
          <MenuTab $w={51} $active>Главная</MenuTab>
          <MenuTab $w={47}>Вставка</MenuTab>
          <MenuTab $w={70}>Разработка</MenuTab>
          <MenuTab $w={23}>Вид</MenuTab>
          <MenuTab $w={55}>Символы</MenuTab>
          <MenuTab $w={106}>Дополнительные</MenuTab>
          <MenuTab $w={19}>ИИ<HotBadge>hot</HotBadge></MenuTab>
        </MenuTabs>
        <MenuRight>
          <MenuCell $gap={3}><I n="send" s={16} w={1.400} />Опубликовать</MenuCell>
          <MenuCell $ml={10} $gap={4}><I n="share" s={15} w={1.500} />Поделиться</MenuCell>
          <MenuCell $ml={11} $gap={3}><I n="gear" s={16} w={1.400} />Параметры</MenuCell>
          <MenuCell $ml={13}><HelpWrap><I n="help" s={17} w={1.400} /><HelpDot /></HelpWrap><Caret $ml={2} /></MenuCell>
          <MenuCell $ml={16}><I n="chevUp" s={13} w={1.500} /></MenuCell>
        </MenuRight>
      </MenuBar>

      <Ribbon>
        <Group $w={89}>
          <Rows>
            <Row $pl={14} $gap={13}><Cell $w={20}><I n="cut" s={18} /></Cell><Cell $w={20}><F n="brush" s={19} /></Cell></Row>
            <Row $pl={14} $gap={8}><Cell $w={20}><I n="copy" s={17} w={2} /></Cell><Cell $w={22}><I n="paste" s={17} w={2} /><Caret $ml={1} /></Cell></Row>
          </Rows>
          <GroupLabel>Буфер обмена</GroupLabel>
        </Group>

        <Group $w={372}>
          <Rows>
            <Row $pl={17} $gap={8}>
              <FontSelect $w={166}><I n="search" s={16} c="#ccc" w={2} />微软雅黑<Push><Caret $ml={0} /></Push></FontSelect>
              <FontSelect $w={64} $pad={12}>16<Push><Caret $ml={0} /></Push></FontSelect>
              <Cell $w={24} $ml={-2}><BigA>A</BigA><Tiny>+</Tiny></Cell>
              <Cell $w={24} $ml={1}><BigA>A</BigA><Tiny>-</Tiny></Cell>
              <Cell $w={24} $ml={-2}><I n="alignL" s={15} /></Cell>
              <Caret $ml={-6} />
            </Row>
            <Row $pl={14} $gap={4}>
              <Cell $on="#ecedf5"><I n="bold" s={15} w={2} /></Cell>
              <Cell><I n="italic" s={14} /></Cell>
              <Cell><I n="under" s={15} /></Cell>
              <Cell><I n="strike" s={15} /></Cell>
              <Cell><SubX>X</SubX><Tiny>2</Tiny></Cell>
              <Cell><SubX>X</SubX><Tiny $low>2</Tiny></Cell>
              <Cell $w={38} $ml={3} $start><I n="txt" s={16} /><Caret /></Cell>
              <Cell $w={30} $start><I n="spacing" s={16} /><Caret /></Cell>
              <Cell $w={30} $start><I n="list" s={16} /><Caret /></Cell>
              <Cell $w={34} $start>ab<Caret /></Cell>
              <Cell $w={26} $start><UnderA>A</UnderA><Caret /></Cell>
            </Row>
          </Rows>
          <GroupLabel>Шрифт и выравнивание</GroupLabel>
          <Launcher $r={9}><I n="launcher" s={11} c="#777" /></Launcher>
        </Group>

        <Group $w={226}>
          <Rows>
            <Row $pl={16}>
              <Tool $w={104} $pl={3} $gap={10}><I n="pointer" s={17} />Выбрать<Caret /></Tool>
              <Tool $w={91} $pl={9} $gap={7}><I n="square" s={15} w={2.200} />Фигура<Caret /></Tool>
            </Row>
            <Row $pl={16}>
              <Tool $w={104} $pl={3} $gap={8}><I n="bigT" s={18} />Текст<Caret /></Tool>
              <Tool $w={91} $pl={6} $gap={7} $on><I n="conn" s={19} />Разъем<Caret /></Tool>
            </Row>
          </Rows>
          <GroupLabel>Инструменты</GroupLabel>
        </Group>

        <Group $w={497}>
          <StylesRow>
            <Gallery>
              {SWATCHES.map(c => <Swatch key={c} $c={c}>Abc</Swatch>)}
              <GalleryArrows><UpCaret /><Caret $ml={0} /><Caret $ml={0} /></GalleryArrows>
            </Gallery>
            <FillCol>
              <FillRow><F n="fillBucket" s={15} />&nbsp;Заполнить<Caret $ml={1} /></FillRow>
              <FillRow><F n="line" s={15} />&nbsp;Лилия<Caret $ml={1} /></FillRow>
              <FillRow><F n="shadow" s={15} />&nbsp;Тень<Caret $ml={1} /></FillRow>
            </FillCol>
          </StylesRow>
          <GroupLabel>Стили</GroupLabel>
          <Launcher $r={9}><I n="launcher" s={11} c="#777" /></Launcher>
        </Group>

        <Group $w={452}>
          <EditCols>
            <EditCol $w={162}>
              <Tool $w={162} $gap={6}><I n="pos" s={18} />Местоположение<Caret $ml={-1} /></Tool>
              <Tool $w={162} $gap={6}><I n="alignObj" s={18} />Выравнивать<Caret $ml={-1} /></Tool>
            </EditCol>
            <EditCol $w={140}>
              <Tool $w={140} $gap={7} $dim><I n="group" s={18} c="#b0b0b0" />Группировать<Caret $ml={-1} $c="#bbb" /></Tool>
              <Tool $w={140} $gap={7}><I n="size" s={18} />Размер<Caret $ml={-1} /></Tool>
            </EditCol>
            <EditCol $w={120}>
              <Tool $w={120} $gap={7}><F n="rotate" s={18} />Повернуть<Caret $ml={-1} /></Tool>
              <Tool $w={120} $gap={7}><I n="lock" s={18} w={2} />Блокировка<Caret $ml={2} /></Tool>
            </EditCol>
          </EditCols>
          <GroupLabel>Редактирование</GroupLabel>
        </Group>

        <Group $w={122}>
          <ReplaceBlock>
            <I n="replace" s={18} c="#aaa" />
            Заменить<br />фигуру
            <ReplaceCaret><Caret $ml={0} $c="#bbb" /></ReplaceCaret>
          </ReplaceBlock>
          <GroupLabel>Заменить</GroupLabel>
        </Group>
      </Ribbon>

      <Main>
        <LeftSide>
          <Rail>
            <RailTop><I n="chevsL" s={16} w={2.200} /></RailTop>
            {RAIL.map(([n, l, a]) => (
              <RailItem key={l} $active={a}>
                <RailIcon $active={a}><I n={n} s={a ? 20 : 19} c={a ? "#1283f3" : "#444"} w={2.200} /></RailIcon>
                <RailLabel>{l}</RailLabel>
              </RailItem>
            ))}
            <RailBottom><I n="gear" s={17} w={1.800} /></RailBottom>
          </Rail>
          <SymPanel>
            <PanelHead>
              <PanelTitle>Символы</PanelTitle>
              <AiLink><I n="sparkOutline" s={17} c="#1283f3" w={1.600} />Символ ИИ</AiLink>
            </PanelHead>
            <SearchBox><I n="search" s={15} c="#aaa" w={2.400} />Поиск символов</SearchBox>
            <ActionRow>
              <ActionItem><I n="chevsUp" s={11} c="#666" />Свернуть все</ActionItem>
              <ActionItem><I n="gear" s={14} c="#555" w={1.500} />Управление</ActionItem>
            </ActionRow>
            <SectionHead $h={40}><Caret $ml={2} />Моя библиотека</SectionHead>
            <DropZone><span>Перетащите<br />обозначения сюда,<br />чтобы добавить их в<br />раздел «Моя<br />библиотека»</span></DropZone>
            <SectionHead><RightCaret />Простые фигуры</SectionHead>
            <SectionHead><RightCaret />Фигуры стрелки</SectionHead>
            <SectionHead><Caret $ml={2} />Круговая диаграмма</SectionHead>
            <ThumbGrid>
              {ART.map((a, i) => (
                <Thumb key={i}>
                  <ThumbSvg viewBox="0 0 40 40">{a}</ThumbSvg>
                  {!NO_BADGE.has(i) && <Premium />}
                </Thumb>
              ))}
            </ThumbGrid>
            <PanelFoot><MoreBtn>Другие обозначения</MoreBtn></PanelFoot>
          </SymPanel>
        </LeftSide>

        <Workspace>
          <RulerTop>
            {rulerTop.map(n => <RulerCell key={n}>{n}</RulerCell>)}
          </RulerTop>
          <CanvasRow>
            <RulerLeft>
              {rulerLeft.map(n => <RulerLeftCell key={n}><RulerLeftText>{n}</RulerLeftText></RulerLeftCell>)}
            </RulerLeft>
            <CanvasArea>
              <Page>
                <PageFrame />
                <DiagramSvg viewBox="442 199 1571 1110">
                  <Ring3 x={1019.500} y={813} />
                  <Ring3 x={1526} y={813} />
                  <path d="M803 813 847 782 841 805H868V822H841L847 844Z" fill="#4a7dff" />
                  <path d="M1019.500 960 1052 1006H1028V1026H1011V1006H987Z" fill="#4a7dff" />
                  <path d="M1825 745 1850 771H1835V855H1850L1825 881 1799 855H1814V771H1799Z" fill="#4a7dff" />
                  <Arrow x0={1176} y0={794} x1={1367} y1={794} w={7} hl={18} hw={11} notch={0} />
                  <Arrow x0={1365} y0={840} x1={1176} y1={840} w={7} hl={18} hw={12} notch={0} />
                  <Arrow x0={1698} y0={582} x1={1598} y1={682} w={6} hl={16} hw={10} />
                  <Arrow x0={1621} y0={703} x1={1721} y1={603} w={6} hl={16} hw={10} />
                  <Arrow x0={1715} y0={1036} x1={1615} y1={936} w={6} hl={16} hw={10} />
                  <Arrow x0={1588} y0={960} x1={1688} y1={1061} w={6} hl={16} hw={10} />
                  <Plane x={1758} y={511} /><Plane x={1835} y={511} /><Plane x={1758} y={571} /><Plane x={1835} y={571} />
                  <Plane x={1758} y={985} /><Plane x={1835} y={985} /><Plane x={1758} y={1046} /><Plane x={1835} y={1046} />
                </DiagramSvg>

                <Title $x={1204} $y={306}>Бизнес-модель и линейка продуктов</Title>

                <Frame $x={852} $y={387} $w={334} $h={206} />
                <Label $x={1024} $y={410} $fs={19.300}>Service Provider</Label>
                <BlueNode $x={890} $y={439} $w={118} $h={48} $pt={3}>Provider 1</BlueNode>
                <BlueNode $x={1031} $y={439} $w={119} $h={48} $pt={3}>Provider 2</BlueNode>
                <BlueNode $x={890} $y={508} $w={118} $h={47}>Provider 3</BlueNode>
                <BlueNode $x={1031} $y={508} $w={119} $h={47}>Provider 4</BlueNode>

                <Frame $x={521} $y={583} $w={265} $h={460} />
                <BlueNode $x={578} $y={639} $w={151} $h={65} $pt={2}>Third Party 1</BlueNode>
                <BlueNode $x={578} $y={734} $w={151} $h={64}>Third Party 2</BlueNode>
                <BlueNode $x={578} $y={828} $w={151} $h={64}>Third Party 3</BlueNode>
                <BlueNode $x={578} $y={923} $w={151} $h={64}>Third Party 4</BlueNode>

                <Frame $x={852} $y={1035} $w={334} $h={208} />
                <Label $x={1019} $y={1060} $fs={18.500}>Multi-channel product content</Label>
                <BlueNode $x={895} $y={1097} $w={119} $h={48}>Channel 1</BlueNode>
                <BlueNode $x={1037} $y={1097} $w={119} $h={48}>Channel 2</BlueNode>
                <BlueNode $x={967} $y={1168} $w={119} $h={48}>Channel 3</BlueNode>

                <Label $x={1020} $y={813} $fs={31}>B2B</Label>
                <Label $x={1526} $y={823} $fs={30.500} $lh={40}>Корпоративные<br />решения</Label>
                <Label $x={1272} $y={767}>Global Distribution</Label>
                <Label $x={1272} $y={877}>Global Big Data</Label>

                <Label $x={1826} $y={441} $fs={23} $lh={31}>Global Service<br />Carrier</Label>
                <Frame $x={1738} $y={486} $w={173} $h={162} $r={14} />
                <Frame $x={1738} $y={961} $w={173} $h={161} $r={14} />
                <Label $x={1826} $y={1150} $fs={23} $lh={31}>Low Cost<br />Carrier</Label>
                <Label $x={1897} $y={806} $fs={18.500} $lh={27}>Virtual<br />Intermodal</Label>

                <Label $x={1617} $y={589} $rot={-45} $fs={19}>Distribution</Label>
                <Label $x={1637} $y={609} $rot={-45} $fs={19}>revenue management</Label>
                <Label $x={1675} $y={673} $rot={-45} $fs={19}>Dynamic price</Label>
                <Label $x={1676} $y={982} $rot={47} $fs={19}>Tariff direct</Label>
                <Label $x={1657} $y={1002} $rot={47} $fs={19}>distribution</Label>
                <Label $x={1637} $y={1032} $rot={47} $fs={19}>Virtual intermodal</Label>

                <TopHandle />
                <RotHandle><IconSvg viewBox="0 0 24 24" $s={12} $c="#1283f3" $w={2.500}><path d="M20 12a8 8 0 1 1-3-6M17 2v5h-5" /></IconSvg></RotHandle>
                <SelBox>{HANDLES.map(([x, y]) => <Handle key={`${x}-${y}`} $x={x} $y={y} />)}</SelBox>
              </Page>
              <AiPill>
                <I n="wand" s={22} c="#6a5cf5" w={1.500} />
                <F n="sparkle" s={22} c="#3a5cf5" />
              </AiPill>
            </CanvasArea>
            <VTrack><VThumb /></VTrack>
          </CanvasRow>
          <HTrack><HThumb /></HTrack>
          <PaletteRow>
            <PaletteIcon><F n="fillBucket" s={13} /><Caret $ml={1} /></PaletteIcon>
            {COLORS.map((c, i) => <Shade key={i} $c={c} />)}
          </PaletteRow>
        </Workspace>

        <RightRail>
          <I n="chevsR" s={16} w={2} />
          <RailTile $on $mt={9}><F n="fillBucket" s={18} c="#fff" /></RailTile>
          <RailTile $mt={10}><I n="badge" s={17} w={2} /></RailTile>
          <RightBottom><I n="gear" s={17} w={1.800} /></RightBottom>
        </RightRail>
      </Main>

      <StatusBar>
        <StatusCell $w={49} $pl={19} $line><I n="sliders" s={16} w={1.500} /></StatusCell>
        <StatusCell $w={130} $pl={17} $line>Страница-1<Caret $ml={12} /></StatusCell>
        <StatusCell $w={40} $pl={12} $line><I n="plus" s={15} w={1.500} /></StatusCell>
        <StatusCell $w={92} $pl={6} $line $blue>Страница-1</StatusCell>
        <StatusRight>
          <StatusCell $w={145} $line $fs={12.700}>Количество фигур: 58</StatusCell>
          <StatusCell $w={192} $pl={8} $line $fs={12.500}>Идентификатор фигуры: 212</StatusCell>
          <StatusCell $pl={19}><I n="layers" s={18} w={1.500} /><Caret $ml={2} /></StatusCell>
          <StatusCell $pl={13} $gap={6} $fs={12.500}><I n="focus" s={17} w={1.500} />Фокусировка</StatusCell>
          <StatusCell $pl={10} $w={39} $line><I n="play" s={18} w={1.500} /></StatusCell>
          <StatusCell $pl={9} $w={308}><I n="minus" s={12} w={2.500} /><ZoomBar /></StatusCell>
        </StatusRight>
      </StatusBar>

      <ImeBar>
        <ImeLogo>S</ImeLogo>
        <ImeChar>中</ImeChar>
        <ImeIcon><F n="quote" s={16} c="#1170d8" /></ImeIcon>
        <ImeIcon><I n="mic" s={18} c="#1170d8" w={2.200} /></ImeIcon>
        <ImeIcon><I n="tableIc" s={17} c="#1170d8" w={2.400} /></ImeIcon>
        <ImeIcon $w={26}><F n="imeFig" s={18} c="#a04ee8" /></ImeIcon>
        <ImeIcon $w={20}><F n="imeGrid" s={15} c="#1170d8" /></ImeIcon>
        <ImeIcon><svg viewBox="0 0 24 24" width="20" height="20"><circle cx="12" cy="12" r="10" fill="#f2f0ee" stroke="#ddd" /><path d="M7 9h9l-2 7-5-1z" fill="#e8602c" /></svg></ImeIcon>
      </ImeBar>
      <StatusEndWrap>
        <I n="sliders" s={15} w={1.500} />
        <I n="focus" s={15} w={1.500} />
      </StatusEndWrap>

      <Dropdown>
        <DropItem $on><I n="conn" s={15} />Разъем</DropItem>
        <DropItem><I n="curve" s={15} />Изогнутый соединитель</DropItem>
        <DropItem><I n="straight" s={15} />Прямой Соединитель</DropItem>
        <DropItem><I n="free" s={15} />Свободный Соединитель</DropItem>
        <DropItem><I n="cross" s={15} />Точки подключения инструмента</DropItem>
        <DropSep />
        <CheckRow $mt={5}><Check />Только текущий инструмент</CheckRow>
        <CheckRow><Check $on><IconSvg viewBox="0 0 24 24" $s={11} $c="#fff" $w={4}><path d="M4 12l6 6L20 6" /></IconSvg></Check>Автоматическое направление</CheckRow>
      </Dropdown>

      <FloatBar>
        <FloatSection $w={62}>
          <ColBtn><FloatIcon><F n="sparkle" s={24} c="#5a48ec" /></FloatIcon>Edraw AI</ColBtn>
        </FloatSection>
        <FloatSection $w={253}>
          <FloatFont>
            <FloatRow $gap={8}>
              <FontSelect $w={89} $pad={4}><I n="search" s={14} c="#ccc" w={2} />微软雅黑<Push><Caret $ml={-4} /></Push></FontSelect>
              <FontSelect $w={47} $pad={7}>16<Push><Caret $ml={0} /></Push></FontSelect>
              <Cell $w={30} $ml={-5}><BigA>A</BigA><Tiny>+</Tiny></Cell>
              <Cell $w={30} $ml={-8}><BigA>A</BigA><Tiny>-</Tiny></Cell>
              <Cell $w={30} $ml={-8}><I n="alignC" s={18} /></Cell>
            </FloatRow>
            <FloatRow>
              <Cell $on="#f0f0f0"><I n="bold" s={15} w={2} /></Cell>
              <Cell $w={30} $ml={3}><I n="italic" s={14} /></Cell>
              <Cell $w={30}><I n="under" s={15} /></Cell>
              <Cell $w={30}><I n="strike" s={15} /></Cell>
              <Cell $w={30}><I n="spacing" s={16} /></Cell>
              <Cell $w={30}><I n="list" s={16} /></Cell>
              <Cell $w={30}>ab</Cell>
              <Cell $w={30}><UnderA>A</UnderA></Cell>
            </FloatRow>
          </FloatFont>
        </FloatSection>
        <FloatSection $w={59}>
          <ColBtn><FloatIcon><F n="brush" s={22} /></FloatIcon>Формат</ColBtn>
        </FloatSection>
        <FloatSection $w={152}>
          <ColBtn $w="76px"><FloatIcon $mb={3} $h={33}><I n="front" s={18} /></FloatIcon>На<br />передний...</ColBtn>
          <ColBtn $w="76px"><FloatIcon $mb={3} $h={33}><I n="backward" s={18} /></FloatIcon>Отправить<br />Назад</ColBtn>
        </FloatSection>
        <FloatSection $w={68} $last>
          <ColBtn $w="52px"><FloatIcon><I n="dotsCircle" s={22} w={1.500} /></FloatIcon>Еще</ColBtn>
          <PinIcon><I n="pin" s={11} c="#bbb" w={1.800} /></PinIcon>
          <CornerIcon><I n="cornerArrows" s={12} c="#aaa" w={1.500} /></CornerIcon>
        </FloatSection>
      </FloatBar>

      <RedBox $x={0} $y={165} $w={298} $h={897} />
      <RedBox $x={558} $y={104} $w={310} $h={286} />
      <RedBox $x={705} $y={595} $w={639} $h={135} />
    </Root>
  );
}
